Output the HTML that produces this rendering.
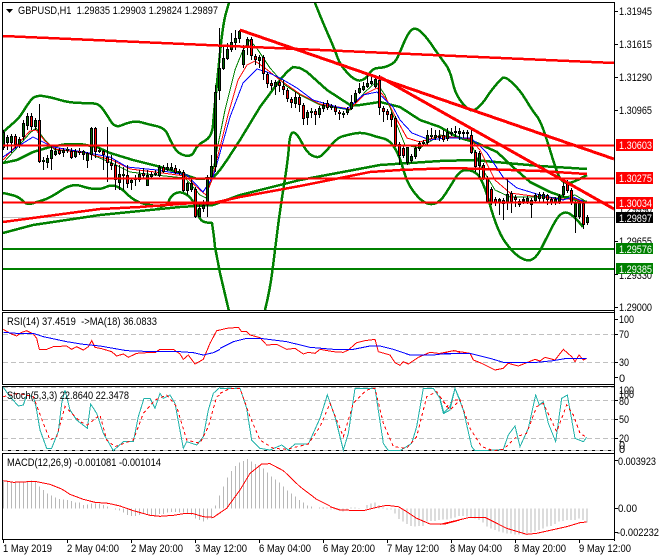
<!DOCTYPE html>
<html><head><meta charset="utf-8"><title>GBPUSD,H1</title>
<style>
html,body{margin:0;padding:0;background:#fff;width:660px;height:560px;overflow:hidden}
svg{display:block;position:absolute;left:0;top:0}
text{font-family:"Liberation Sans",sans-serif;font-size:11px;fill:#000}
.w{fill:#fff}
</style></head><body>
<svg width="660" height="560" viewBox="0 0 660 560" xmlns="http://www.w3.org/2000/svg" shape-rendering="crispEdges">
<defs><clipPath id="m"><rect x="3" y="3" width="611" height="307"/></clipPath></defs>
<rect width="660" height="560" fill="#fff"/>

<g clip-path="url(#m)">
<path d="M3 217.5H614" stroke="#c0c0c0" fill="none"/>
<g fill="none" stroke="#008000" stroke-width="2.5">
<path d="M3 132 Q10 126 15 121.5 Q20 117 23.5 111 Q27 105 31 100 Q35 95 42.5 96 Q50 97 60 100 Q70 103 81.5 103 Q93 103 96.5 104 Q100 105 103.5 110 Q107 115 111 121.5 Q115 128 121 125.5 Q127 123 132 122 Q137 121 142 122.5 Q147 124 156 126 Q165 128 167.5 134 Q170 140 174 147 Q178 154 185 155.5 Q192 157 194.5 151 Q197 145 204.5 141 Q212 137 213 125 Q214 113 215.5 98 Q217 83 220 53 Q223 23 226 13 Q229 3 232 -10"/>
<path d="M312 -10 L315 3 Q323 23 329 36.5 Q335 50 337.5 57.5 Q340 65 347.5 73 Q355 81 360 80.5 Q365 80 369 74 Q373 68 378 68 Q383 68 389 65.5 Q395 63 397.5 57.5 Q400 52 404 42.5 Q408 33 411.5 30 Q415 27 420 31 Q425 35 432.5 46 Q440 57 445 63.5 Q450 70 452.5 81.5 Q455 93 460 100 Q465 107 469 109.5 Q473 112 478 107.5 Q483 103 486.5 97.5 Q490 92 495 86 Q500 80 502.5 78 Q505 76 512.5 83 Q520 90 526 100 Q532 110 536 115 Q540 120 543.5 130 Q547 140 552 156.5 Q557 173 560 178 Q563 183 568 183 Q573 183 587 175"/>
<path d="M3 193 Q13 195 16.5 196.5 Q20 198 23.5 201.5 Q27 205 32 203.5 Q37 202 43.5 200 Q50 198 61 190.5 Q72 183 81 186 Q90 189 96 189 Q102 189 106 187 Q110 185 115 186 Q120 187 126.5 193.5 Q133 200 140 202.5 Q147 205 157 206 Q167 207 168.5 202 Q170 197 173.5 194.5 Q177 192 181 192.5 Q185 193 189 196.5 Q193 200 195.5 207.5 Q198 215 200 218.5 Q202 222 207 222.5 L212 223 Q214 235 215 247 L220 273 L228 307 L232 325"/>
<path d="M262 325 L265 310 Q270 290 272.5 270 Q275 250 277.5 230 Q280 210 284 185 Q288 160 289 146 Q290 132 293.5 132.5 Q297 133 302 143 Q307 153 312 155.5 Q317 158 320 156.5 Q323 155 330 146.5 Q337 138 342 136.5 Q347 135 354.5 133.5 Q362 132 369.5 134.5 Q377 137 383.5 138.5 Q390 140 395 148.5 Q400 157 403.5 170 Q407 183 413.5 191.5 Q420 200 425 202.5 Q430 205 435 203.5 Q440 202 445 194.5 Q450 187 455 178.5 Q460 170 466.5 170 Q473 170 478 175 Q483 180 490 205 Q497 230 504.5 241 Q512 252 519.5 257 Q527 262 532 259.5 Q537 257 542 247 Q547 237 553.5 224.5 Q560 212 566 212.5 Q572 213 583 227"/>
<polyline points="3,163 17,160 33,152 50,147 67,144 80,144 97,147 110,153 133,160 157,166 180,173 197,179 213,178 220,170 227,160 240,140 260,107 280,80 287,72 293,67 300,68 307,72 327,90 350,105 360,105 380,102 400,107 420,120 440,127 457,137 477,143 497,152 513,167 530,182 550,192 567,198 587,202"/>
<polyline points="3,233 33,225 100,215 180,207 213,205 240,195 300,180 380,165 440,161 473,160 540,166 587,169"/>
</g>
<polyline fill="none" stroke="#008000" points="3,163 15,150 30,133 36,128 45,140 55,150 85,152 112,163 130,172 155,175 185,178 200,195 206,198 212,175 217,150 225,110 235,70 243,50 250,40 258,50 270,68 285,85 300,95 320,105 350,110 365,92 376,82 385,95 395,120 405,145 420,148 440,135 470,140 480,165 495,190 510,197 540,197 560,198 575,195 587,202"/>
<polyline fill="none" stroke="#ff0000" points="3,160 15,147 30,131 36,130 45,141 55,149 85,153 112,160 130,169 155,172 185,176 200,190 206,195 212,180 218,155 228,115 238,80 247,65 255,61 265,68 280,80 300,94 320,104 350,109 365,94 377,88 387,100 397,120 407,138 420,142 440,136 470,139 480,150 495,180 510,193 540,197 560,199 575,199 587,203"/>
<polyline fill="none" stroke="#0000ff" points="3,157 17,147 33,137 43,142 53,147 83,152 110,157 127,167 157,170 187,175 203,192 213,177 218,160 230,117 243,83 257,69 267,72 280,78 297,88 313,100 337,107 347,109 363,95 377,92 393,107 400,120 412,133 430,140 445,138 470,138 477,143 487,153 503,177 517,188 540,195 563,200 573,197 587,203"/>

<g transform="translate(.5 0)" fill="none">
<path stroke="#000" d="M3 130V150M7 135V150M11 134V153M15 134V148M19 137V148M23 120V140M27 113V130M31 113V130M35 118V130M39 104V163M43 157V170M47 155V168M51 145V170M55 148V156M59 148V155M63 148V157M67 147V153M71 148V159M75 149V158M79 148V155M83 150V160M87 152V168M91 127V160M95 127V158M99 148V153M103 150V170M107 127V182M111 155V170M115 160V190M119 165V190M123 167V190M127 165V188M131 178V190M135 175V186M139 170V182M143 168V178M147 170V186M151 172V178M155 170V176M159 165V177M163 165V173M167 163V171M171 163V171M175 165V174M179 169V175M183 170V192M187 182V195M191 178V192M195 187V218M199 203V217M203 200V212M207 175V217M211 155V178M215 85V172M219 28V100M223 47V70M227 43V60M231 33V52M235 30V50M239 30V43M243 45V68M247 37V55M251 37V60M255 54V65M259 55V68M263 55V80M267 72V88M271 80V90M275 80V95M279 80V92M283 80V95M287 88V102M291 97V108M295 92V108M299 95V112M303 103V125M307 110V125M311 108V118M315 109V125M319 106V118M323 102V112M327 100V110M331 104V110M335 105V115M339 110V120M343 111V118M347 107V115M351 95V110M355 90V103M359 83V94M363 82V91M367 75V88M371 75V85M375 75V88M379 75V115M383 106V122M387 109V120M391 112V127M395 116V147M399 142V165M403 146V158M407 147V165M411 154V163M415 146V159M419 141V151M423 140V146M427 130V145M431 128V139M435 130V140M439 130V141M443 130V142M447 128V141M451 128V136M455 126V137M459 128V140M463 130V138M467 130V139M471 128V154M475 150V172M479 151V178M483 163V180M487 176V203M491 187V205M495 197V206M499 198V215M503 198V220M507 179V210M511 191V213M515 195V207M519 199V207M523 197V204M527 196V204M531 198V218M535 193V203M539 192V202M543 192V203M547 194V205M551 197V205M555 197V205M559 194V204M563 182V197M567 180V193M571 188V205M575 201V233M579 201V219M583 201V229M587 215V225"/>
<path stroke="#000" stroke-width="3" d="M3 132V148M7 137V143M11 136V143M15 136V145M19 139V145M23 123V137M27 116V126M31 116V127M35 120V127M39 120V162M43 160V162M47 158V163M51 150V159M55 151V155M59 150V154M63 150V153M67 149V151M71 151V158M75 151V157M79 151V153M83 151V155M87 153V161M91 128V155M95 128V152M99 150V152M103 151V155M107 157V163M111 163V166M115 165V180M119 174V183M123 174V176M127 175V184M131 180V183M135 178V180M139 174V180M143 173V176M147 175V186M151 174V177M155 173V175M159 167V176M163 167V172M167 167V170M171 167V170M175 168V173M179 171V173M183 172V191M187 183V191M191 183V190M195 189V217M199 208V217M203 205V209M207 177V205M211 166V177M215 92V167M219 68V91M223 58V69M227 49V59M231 42V50M235 38V43M239 31V39M243 50V65M247 39V48M251 39V56M255 56V60M259 57V61M263 57V74M267 74V84M271 83V86M275 82V87M279 82V86M283 86V90M287 90V99M291 99V103M295 97V104M299 97V105M303 105V119M307 112V118M311 111V113M315 111V115M319 108V115M323 105V109M327 103V108M331 106V108M335 107V112M339 112V114M343 113V115M347 109V113M351 102V109M355 93V102M359 88V93M363 86V90M367 83V87M371 81V84M375 79V87M379 80V108M383 108V112M387 111V115M391 114V120M395 118V145M399 144V156M403 148V156M407 147V163M411 156V161M415 148V157M419 143V149M423 142V144M427 135V143M431 135V137M435 135V138M439 136V138M443 135V140M447 132V139M451 132V134M455 131V133M459 131V134M463 132V134M467 132V134M471 135V153M475 152V167M479 153V166M483 165V179M487 178V202M491 189V203M495 199V203M499 199V203M503 200V204M507 194V203M511 193V202M515 197V200M519 201V205M523 199V202M527 198V202M531 200V205M535 195V201M539 194V199M543 194V199M547 195V200M551 199V203M555 199V203M559 196V202M563 186V195M567 182V191M571 190V203M575 203V217M579 203V217M583 203V225M587 217V223"/>
<path stroke="#006400" d="M3 133V147M7 138V142M11 137V142M19 140V144M23 124V136M27 117V125M35 121V126M43 160V161M47 159V162M51 151V158M55 152V154M63 151V152M67 149V150M75 152V156M83 152V154M87 154V160M91 129V154M99 150V151M119 175V182M123 174V175M131 181V182M139 175V179M147 176V185M151 175V176M155 173V174M159 168V175M167 168V169M171 168V169M179 171V172M187 184V190M191 184V189M199 209V216M203 206V208M207 178V204M211 167V176M215 93V166M219 69V90M223 59V68M227 50V58M231 43V49M235 39V42M239 32V38M243 51V64M247 40V47M259 58V60M275 83V86M295 98V103M307 113V117M311 111V112M319 109V114M323 106V108M331 106V107M343 113V114M347 110V112M351 103V108M355 94V101M359 89V92M363 87V89M367 84V86M371 82V83M375 80V86M407 148V162M411 157V160M415 149V156M419 144V148M423 142V143M427 136V142M431 135V136M435 136V137M447 133V138M451 132V133M459 132V133M479 154V165M499 200V202M507 195V202M519 202V204M527 199V201M531 201V204M535 196V200M539 195V198M543 195V198M555 200V202M559 197V201M563 187V194M575 204V216M579 204V216M587 218V222"/>
<path stroke="#ff0000" d="M15 137V144M31 117V126M39 121V161M59 151V153M71 152V157M79 151V152M95 129V151M103 152V154M107 158V162M111 164V165M115 166V179M127 176V183M135 178V179M143 174V175M163 168V171M175 169V172M183 173V190M195 190V216M251 40V55M255 57V59M263 58V73M267 75V83M271 84V85M279 83V85M283 87V89M287 91V98M291 100V102M299 98V104M303 106V118M315 112V114M327 104V107M335 108V111M339 112V113M379 81V107M383 109V111M387 112V114M391 115V119M395 119V144M399 145V155M403 149V155M443 136V139M471 136V152M475 153V166M483 166V178M487 179V201M491 190V202M495 200V202M503 201V203M511 194V201M515 198V199M547 196V199M551 200V202M567 183V190M571 191V202M583 204V224"/>
</g>

<g fill="none" stroke="#ff0000">
<path stroke-width="2" d="M3 145.5H614M3 178.5H614M3 202.5H614"/>
<path stroke-width="2.5" d="M3 36L614 63"/>
<path stroke-width="3" d="M240 30L614 159"/>
<path stroke-width="3" d="M380 77L614 209"/>
<polyline stroke-width="2.5" points="3,222 100,209 140,207 193,203 213,203 240,197 300,186 370,172 400,170 453,168 540,171 587,174"/>
</g>
<path d="M3 249H614M3 269H614" stroke="#008000" stroke-width="2" fill="none"/>
</g>

<!-- frames -->
<g fill="none" stroke="#000">
<path d="M2.5 2V311M2.5 312V384M2.5 386V451M2.5 453V539" />
<path d="M2 2.5H614.5V541M2 310.5H614.5M2 312.5H614.5M2 384.5H614.5M2 386.5H614.5M2 450.5H614.5M2 453.5H614.5M2 539.5H614.5"/>
<path d="M615 11.5h3M615 44.5h3M615 77.5h3M615 110.5h3M615 241.5h3M615 274.5h3M615 307.5h3M615 319.5h3M615 334.5h3M615 362.5h3M615 377.5h3M615 400.5h3M615 419.5h3M615 438.5h3M615 460.5h3M615 508.5h3M615 532.5h3"/>
<path d="M3.5 540v3M67.5 540v3M131.5 540v3M195.5 540v3M259.5 540v3M323.5 540v3M387.5 540v3M451.5 540v3M515.5 540v3M579.5 540v3"/>
</g>

<!-- grids -->
<g fill="none" stroke="#c0c0c0" stroke-dasharray="5 3">
<path d="M3 334.5H614M3 362.5H614M3 387.5H614M3 400.5H614M3 419.5H614M3 438.5H614M3 450.5H614"/>
</g>

<!-- RSI -->
<g fill="none" stroke-width="3">
<g transform="translate(0 300) scale(.33333)">
<polyline stroke="#ff0000" points="10,88 30,100 50,108 65,97 80,92 100,102 110,115 118,148 140,148 160,140 200,138 215,148 230,140 250,150 265,140 275,122 285,142 305,146 335,155 350,168 370,162 385,172 410,160 440,158 465,158 480,148 520,148 540,162 550,178 565,165 585,192 610,178 630,130 650,92 660,90"/>
<polyline stroke="#0000ff" points="10,97 50,100 100,100 130,110 200,125 250,133 300,138 380,152 460,155 540,155 580,158 610,165 640,158 660,148"/>
<polyline stroke="#20b2aa" points="10,262 30,290 55,318 70,315 80,285 100,290 108,320 120,390 140,445 155,445 175,395 185,310 195,270 210,330 230,360 262,385 272,312 290,340 310,400 340,452 370,425 400,425 415,350 432,295 450,295 465,325 480,280 490,295 510,285 525,310 550,445 560,425 590,435 610,410 625,330 640,280 660,262"/>
<polyline stroke="#ff0000" stroke-dasharray="9 9" points="10,290 55,280 100,290 130,370 150,420 170,410 195,320 240,365 262,375 300,345 320,420 345,440 400,420 430,340 465,300 500,285 530,320 560,420 600,430 625,380 650,290 660,285"/>
</g>
<g transform="translate(220 300) scale(.33333)">
<polyline stroke="#ff0000" points="0,90 20,85 55,82 65,95 80,95 90,105 120,113 140,135 170,133 200,148 225,145 250,162 265,157 285,160 300,148 340,155 370,157 385,150 410,128 435,122 465,118 475,155 510,165 525,188 540,196 550,185 565,192 595,172 630,157 670,162 685,155 705,152 720,158"/>
<polyline stroke="#0000ff" points="0,145 40,125 80,115 120,115 200,125 270,142 340,148 400,148 450,138 480,138 520,148 570,165 640,165 680,160 720,160"/>
<polyline stroke="#20b2aa" points="0,265 60,265 80,325 95,420 120,445 150,450 185,435 205,450 225,432 265,432 300,355 322,285 345,350 370,450 385,400 405,265 465,265 490,430 505,452 540,452 575,430 590,380 610,265 640,265 660,295 672,340 690,330 705,265 720,300"/>
<polyline stroke="#ff0000" stroke-dasharray="9 9" points="0,280 30,265 60,265 90,350 120,420 160,445 200,448 265,432 300,380 330,310 370,410 400,310 440,270 465,265 490,370 520,440 560,445 590,410 620,290 650,275 680,320 700,300 720,300"/>
</g>
<g transform="translate(440 300) scale(.33333)">
<polyline stroke="#ff0000" points="0,160 40,152 90,160 100,180 125,190 165,210 190,205 205,190 235,198 260,188 285,178 300,183 315,172 345,180 370,148 395,170 405,185 417,165 430,180 440,175"/>
<polyline stroke="#0000ff" points="0,162 90,160 150,175 190,187 280,188 340,182 380,175 440,175"/>
<polyline stroke="#20b2aa" points="0,300 10,340 30,320 45,265 70,330 95,440 105,452 170,450 190,448 205,405 225,378 240,440 265,385 287,285 298,315 310,305 325,370 347,425 365,295 382,285 405,415 430,425 440,412"/>
<polyline stroke="#ff0000" stroke-dasharray="9 9" points="0,290 30,330 60,300 90,385 125,440 160,452 190,448 230,410 260,400 290,320 310,310 350,395 380,315 400,345 420,400 440,412"/>
</g>

<!-- MACD hist -->
<g transform="translate(0 440) scale(.33333)" stroke="#b8b8b8">
<path d="M10 206V122M22 206V122M34 206V125M46 206V126M58 206V127M70 206V127M82 206V125M94 206V122M106 206V125M118 206V140M130 206V150M142 206V160M154 206V167M166 206V173M178 206V177M190 206V178M202 206V180M214 206V183M226 206V187M238 206V188M250 206V195M262 206V193M274 206V190M286 206V190M298 206V190M310 206V195M322 206V200M334 206V205M346 206V209M358 206V212M370 206V218M382 206V225M394 206V228M406 206V228M418 206V225M430 206V222M442 206V222M454 206V225M466 206V226M478 206V222M490 206V222M502 206V218M514 206V216M526 206V216M538 206V218M550 206V218M562 206V220M574 206V225M586 206V235M598 206V240M610 206V245M622 206V238M634 206V235M646 206V197M658 206V167M670 206V140M682 206V113M694 206V93M706 206V78M718 206V68M730 206V63M742 206V57M754 206V65M766 206V72M778 206V75M790 206V85M802 206V97M814 206V110M826 206V118M838 206V127M850 206V140M862 206V152M874 206V160M886 206V170M898 206V180M910 206V188M922 206V197M934 206V200M958 206V203M970 206V203"/>
</g>
<g transform="translate(320 450) scale(.33333)" stroke="#b8b8b8">
<path d="M9 175V172M21 175V172M33 175V178M45 175V178M57 175V182M69 175V185M81 175V180M93 175V172M105 175V172M117 175V177M129 175V175M141 175V165M153 175V160M165 175V157M177 175V165M189 175V172M201 175V178M213 175V178M225 175V190M237 175V207M249 175V215M261 175V222M273 175V228M285 175V230M297 175V228M309 175V228M321 175V215M333 175V213M345 175V213M357 175V210M369 175V208M381 175V205M393 175V205M405 175V203"/>
</g>
<g transform="translate(440 300) scale(.33333)" stroke="#b8b8b8">
<path d="M21 625V658M33 625V652M45 625V650M57 625V648M69 625V648M81 625V650M93 625V652M105 625V655M117 625V660M129 625V668M141 625V680M153 625V685M165 625V690M177 625V695M189 625V698M201 625V700M213 625V700M225 625V703M237 625V703M249 625V703M261 625V700M273 625V697M285 625V695M297 625V690M309 625V685M321 625V680M333 625V678M345 625V672M357 625V665M369 625V663M381 625V660M393 625V660M405 625V660M417 625V655M429 625V660M441 625V668"/>
</g>

<!-- MACD signal -->
<g transform="translate(0 440) scale(.33333)"><polyline stroke="#ff0000" points="10,122 40,127 85,125 110,125 150,133 185,147 210,163 250,178 285,187 325,190 360,198 400,212 450,226 480,229 520,226 550,221 580,221 610,230 640,232 680,205 720,150 750,100 785,72 810,71 850,92 900,140 950,178 990,198"/></g>
<g transform="translate(320 450) scale(.33333)"><polyline stroke="#ff0000" points="30,170 60,180 130,182 170,172 200,166 235,170 260,185 290,205 330,222 375,222 420,210"/></g>
<g transform="translate(440 300) scale(.33333)"><polyline stroke="#ff0000" points="0,673 90,652 135,652 200,685 260,703 290,700 380,680 420,668 440,666"/></g>
</g>

<!-- labels -->
<g shape-rendering="auto">
<path d="M6 9h7l-3.5 4z" fill="#000"/>
<text x="18" y="14" textLength="200" lengthAdjust="spacingAndGlyphs">GBPUSD,H1&#160;&#160;1.29835 1.29903 1.29824 1.29897</text>
<text x="7" y="325" textLength="150" lengthAdjust="spacingAndGlyphs">RSI(14) 37.4519&#160;&#160;-&gt;MA(18) 36.0833</text>
<text x="7" y="399" textLength="122" lengthAdjust="spacingAndGlyphs">Stoch(5,3,3) 22.8640 22.3478</text>
<text x="7" y="466" textLength="154" lengthAdjust="spacingAndGlyphs">MACD(12,26,9) -0.001081 -0.001014</text>

<g>
<text x="619" y="15" textLength="33" lengthAdjust="spacingAndGlyphs">1.31945</text>
<text x="619" y="48" textLength="33" lengthAdjust="spacingAndGlyphs">1.31615</text>
<text x="619" y="81" textLength="33" lengthAdjust="spacingAndGlyphs">1.31290</text>
<text x="619" y="114" textLength="33" lengthAdjust="spacingAndGlyphs">1.30965</text>
<text x="619" y="147" textLength="33" lengthAdjust="spacingAndGlyphs">1.30640</text>
<text x="619" y="180" textLength="33" lengthAdjust="spacingAndGlyphs">1.30315</text>
<text x="619" y="213" textLength="33" lengthAdjust="spacingAndGlyphs">1.29990</text>
<text x="619" y="245" textLength="33" lengthAdjust="spacingAndGlyphs">1.29655</text>
<text x="619" y="279" textLength="33" lengthAdjust="spacingAndGlyphs">1.29330</text>
<text x="619" y="311" textLength="33" lengthAdjust="spacingAndGlyphs">1.29000</text>

<text x="619" y="323" textLength="15" lengthAdjust="spacingAndGlyphs">100</text>
<text x="619" y="338" textLength="10" lengthAdjust="spacingAndGlyphs">70</text>
<text x="619" y="366" textLength="10" lengthAdjust="spacingAndGlyphs">30</text>
<text x="619" y="382">0</text>

<text x="619" y="394" textLength="15" lengthAdjust="spacingAndGlyphs">100</text>
<text x="619" y="398" textLength="15" lengthAdjust="spacingAndGlyphs">100</text>
<text x="619" y="405" textLength="10" lengthAdjust="spacingAndGlyphs">80</text>
<text x="619" y="423" textLength="10" lengthAdjust="spacingAndGlyphs">50</text>
<text x="619" y="442" textLength="10" lengthAdjust="spacingAndGlyphs">20</text>
<text x="619" y="449">0</text>
<text x="619" y="453">0</text>

<text x="618" y="465" textLength="38" lengthAdjust="spacingAndGlyphs">0.003923</text>
<text x="618" y="512" textLength="19" lengthAdjust="spacingAndGlyphs">0.00</text>
<text x="617" y="536" textLength="42" lengthAdjust="spacingAndGlyphs">-0.002232</text>
</g>

<g shape-rendering="crispEdges">
<rect x="616" y="139" width="37" height="12" fill="#ff0000"/>
<rect x="616" y="172" width="37" height="12" fill="#ff0000"/>
<rect x="616" y="197" width="37" height="12" fill="#ff0000"/>
<rect x="616" y="212" width="37" height="11" fill="#000"/>
<rect x="616" y="243" width="37" height="11" fill="#008000"/>
<rect x="616" y="263" width="37" height="11" fill="#008000"/>
</g>
<text class="w" x="619" y="149" textLength="33" lengthAdjust="spacingAndGlyphs">1.30603</text>
<text class="w" x="619" y="182" textLength="33" lengthAdjust="spacingAndGlyphs">1.30275</text>
<text class="w" x="619" y="207" textLength="33" lengthAdjust="spacingAndGlyphs">1.30034</text>
<text class="w" x="619" y="222" textLength="33" lengthAdjust="spacingAndGlyphs">1.29897</text>
<text class="w" x="619" y="253" textLength="33" lengthAdjust="spacingAndGlyphs">1.29576</text>
<text class="w" x="619" y="273" textLength="33" lengthAdjust="spacingAndGlyphs">1.29385</text>

<text x="3" y="552" textLength="49" lengthAdjust="spacingAndGlyphs">1 May 2019</text>
<text x="67" y="552" textLength="52" lengthAdjust="spacingAndGlyphs">2 May 04:00</text>
<text x="131" y="552" textLength="52" lengthAdjust="spacingAndGlyphs">2 May 20:00</text>
<text x="195" y="552" textLength="52" lengthAdjust="spacingAndGlyphs">3 May 12:00</text>
<text x="259" y="552" textLength="52" lengthAdjust="spacingAndGlyphs">6 May 04:00</text>
<text x="323" y="552" textLength="52" lengthAdjust="spacingAndGlyphs">6 May 20:00</text>
<text x="387" y="552" textLength="52" lengthAdjust="spacingAndGlyphs">7 May 12:00</text>
<text x="450" y="552" textLength="52" lengthAdjust="spacingAndGlyphs">8 May 04:00</text>
<text x="514" y="552" textLength="52" lengthAdjust="spacingAndGlyphs">8 May 20:00</text>
<text x="579" y="552" textLength="52" lengthAdjust="spacingAndGlyphs">9 May 12:00</text>
</g>
</svg>
</body></html>
